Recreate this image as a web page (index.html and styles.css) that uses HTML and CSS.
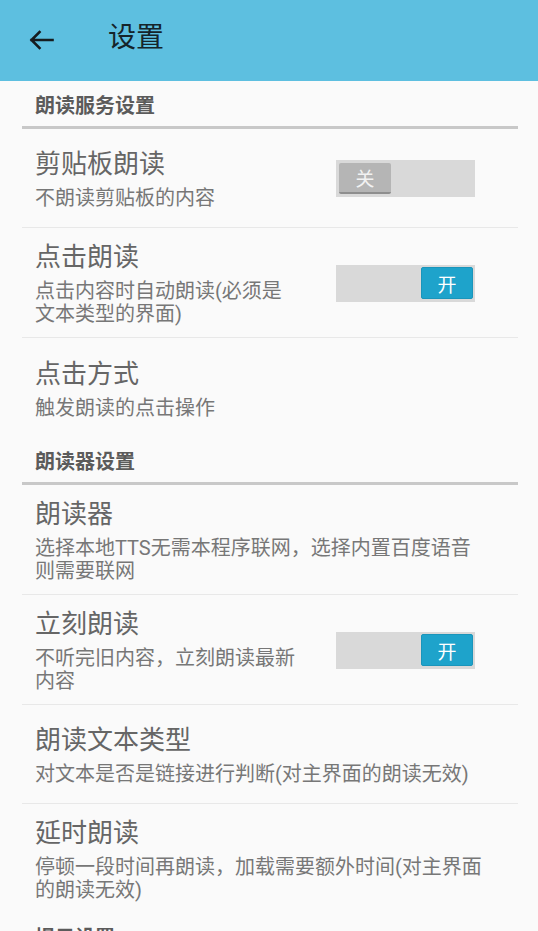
FILE: index.html
```html
<!DOCTYPE html>
<html lang="zh-CN">
<head>
<meta charset="utf-8">
<title>设置</title>
<link rel="stylesheet" href="styles.css">
</head>
<body>
<div class="screen">
  <header class="appbar">
    <svg class="back" width="26" height="20" viewBox="0 0 26 20" aria-hidden="true">
      <path d="M24.5 10H3.5M11.5 2L3.5 10L11.5 18" fill="none" stroke="#161c1f" stroke-width="2.6" stroke-linecap="square" stroke-linejoin="miter"/>
    </svg>
    <h1 class="title">设置</h1>
  </header>

  <main class="list">
    <section class="group">
      <h2 class="group-title">朗读服务设置</h2>

      <div class="row">
        <div class="text narrow">
          <div class="row-title">剪贴板朗读</div>
          <div class="row-sub">不朗读剪贴板的内容</div>
        </div>
        <div class="switch off"><span class="thumb">关</span></div>
      </div>

      <div class="row">
        <div class="text narrow">
          <div class="row-title">点击朗读</div>
          <div class="row-sub">点击内容时自动朗读(必须是文本类型的界面)</div>
        </div>
        <div class="switch on"><span class="thumb">开</span></div>
      </div>

      <div class="row last">
        <div class="text">
          <div class="row-title">点击方式</div>
          <div class="row-sub">触发朗读的点击操作</div>
        </div>
      </div>
    </section>

    <section class="group">
      <h2 class="group-title">朗读器设置</h2>

      <div class="row">
        <div class="text">
          <div class="row-title">朗读器</div>
          <div class="row-sub">选择本地TTS无需本程序联网，选择内置百度语音则需要联网</div>
        </div>
      </div>

      <div class="row">
        <div class="text narrow">
          <div class="row-title">立刻朗读</div>
          <div class="row-sub">不听完旧内容，立刻朗读最新内容</div>
        </div>
        <div class="switch on"><span class="thumb">开</span></div>
      </div>

      <div class="row">
        <div class="text">
          <div class="row-title">朗读文本类型</div>
          <div class="row-sub">对文本是否是链接进行判断(对主界面的朗读无效)</div>
        </div>
      </div>

      <div class="row last">
        <div class="text">
          <div class="row-title">延时朗读</div>
          <div class="row-sub">停顿一段时间再朗读，加载需要额外时间(对主界面的朗读无效)</div>
        </div>
      </div>
    </section>

    <section class="group">
      <h2 class="group-title">提示设置</h2>
    </section>
  </main>
</div>
</body>
</html>
```

FILE: styles.css
```css
html, body {
  margin: 0;
  padding: 0;
}

body {
  background: #fafafa;
  font-family: "Roboto", "Noto Sans CJK SC", sans-serif;
  width: 538px;
  height: 931px;
  overflow: hidden;
}

.screen {
  width: 538px;
  height: 931px;
  overflow: hidden;
  background: #fafafa;
}

.appbar {
  height: 81px;
  box-sizing: border-box;
  background: #5dbfe0;
  display: flex;
  align-items: center;
  padding: 0 0 5px 28px;
}

.back {
  display: block;
  margin-top: 4px;
}

.title {
  margin: 0 0 0 54px;
  font-size: 28px;
  line-height: 34px;
  font-weight: normal;
  color: #15242a;
}

.list {
  display: block;
}

.group-title {
  margin: 0 20px 0 22px;
  padding: 13px 13px 8px;
  font-size: 20px;
  line-height: 24px;
  font-weight: bold;
  color: #5b5b5b;
  border-bottom: 3px solid #c8c8c8;
}

.row {
  margin: 0 20px 0 22px;
  padding: 12px 0 11px 13px;
  min-height: 99px;
  box-sizing: border-box;
  display: flex;
  align-items: center;
  border-bottom: 1px solid #e8e8e8;
}

.row.last {
  border-bottom: none;
}

.text {
  width: 450px;
}

.text.narrow {
  width: 263px;
}

.row-title {
  font-size: 26px;
  line-height: 34px;
  color: #666666;
}

.row-sub {
  margin-top: 6px;
  font-size: 20px;
  line-height: 23px;
  color: #777777;
}

.switch {
  margin-left: 38px;
  width: 139px;
  height: 37px;
  box-sizing: border-box;
  background: #d9d9d9;
  display: flex;
  align-items: center;
}

.switch.off {
  justify-content: flex-start;
  padding-left: 3px;
}

.switch.on {
  justify-content: flex-end;
  padding-right: 2px;
}

.thumb {
  width: 52px;
  height: 31px;
  box-sizing: border-box;
  display: flex;
  align-items: center;
  justify-content: center;
  font-size: 19px;
  border-radius: 2px;
}

.switch.off .thumb {
  background: #b5b5b5;
  color: #f2f2f2;
  border-bottom: 2px solid #8e8e8e;
}

.switch.on .thumb {
  background: #1ea3cb;
  color: #ffffff;
  height: 32px;
  border: 1px solid #1a95bb;
}
```
